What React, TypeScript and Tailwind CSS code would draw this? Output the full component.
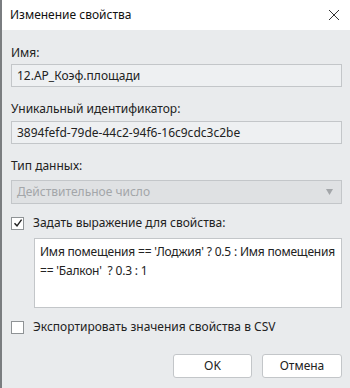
import React from "react";

const font = { fontFamily: '"Noto Sans", "Open Sans", sans-serif' };

const Field = ({ value }: { value: string }) => (
  <div className="h-[23px] border border-[#c3c6c9] bg-[#eef0f2] px-[5px] flex items-center text-[12px] text-[#222]">
    {value}
  </div>
);

const Check = ({ checked }: { checked?: boolean }) => (
  <div className="w-[13px] h-[13px] border border-[#8f9396] bg-white flex items-center justify-center">
    {checked && (
      <svg width="10" height="10" viewBox="0 0 10 10">
        <path d="M1.5 5.2 L4 7.8 L8.6 1.6" fill="none" stroke="#222" strokeWidth="1.4" />
      </svg>
    )}
  </div>
);

export default function App() {
  return (
    <div className="w-[350px] h-[388px] flex bg-[#e9ebed] overflow-hidden" style={font}>
      <div className="w-[2px] bg-[#7a7d80]" />
      <div className="flex-1 flex flex-col">
        {/* Title bar */}
        <div className="h-[30px] bg-white flex items-center justify-between pl-[8px] pr-[10px]">
          <span className="text-[12px] text-[#111]">Изменение свойства</span>
          <svg width="12" height="12" viewBox="0 0 12 12">
            <path d="M1 1 L11 11 M11 1 L1 11" stroke="#333" strokeWidth="1" />
          </svg>
        </div>

        <div className="flex flex-col px-[9px] pr-[8px] text-[12px] text-[#222]">
          <div className="mt-[14px] mb-[2px] leading-[18px]">Имя:</div>
          <Field value="12.АР_Коэф.площади" />

          <div className="mt-[13px] mb-[3px] leading-[18px]">Уникальный идентификатор:</div>
          <Field value="3894fefd-79de-44c2-94f6-16c9cdc3c2be" />

          <div className="mt-[13px] mb-[5px] leading-[18px]">Тип данных:</div>
          <div className="h-[24px] border border-[#c3c6c9] bg-[#dfe1e3] px-[5px] flex items-center justify-between text-[#a3a6a9]">
            <span>Действительное число</span>
            <svg width="7" height="6" viewBox="0 0 7 6" className="mr-[3px]">
              <path d="M0 0 H7 L3.5 6 Z" fill="#a3a6a9" />
            </svg>
          </div>

          <div className="mt-[10px] flex items-center gap-[9px] leading-[18px]">
            <Check checked />
            <span>Задать выражение для свойства:</span>
          </div>

          <div className="ml-[23px] mt-[6px] h-[70px] border border-[#c3c6c9] bg-white px-[5px] pt-[3px] leading-[19px] text-[#222] whitespace-nowrap tracking-[-0.2px]">
            <div>Имя помещения == 'Лоджия' ? 0.5 : Имя помещения</div>
            <div>== 'Балкон'&nbsp; ? 0.3 : 1</div>
          </div>

          <div className="mt-[10px] flex items-center gap-[9px] leading-[18px]">
            <Check />
            <span>Экспортировать значения свойства в CSV</span>
          </div>

          <div className="mt-[18px] flex justify-end gap-[10px]">
            <button className="w-[79px] h-[24px] rounded-[3px] border border-[#c3c6c9] bg-white text-[12px] text-[#222]">
              OK
            </button>
            <button className="w-[80px] h-[24px] rounded-[3px] border border-[#c3c6c9] bg-white text-[12px] text-[#222]">
              Отмена
            </button>
          </div>
        </div>
      </div>
    </div>
  );
}
